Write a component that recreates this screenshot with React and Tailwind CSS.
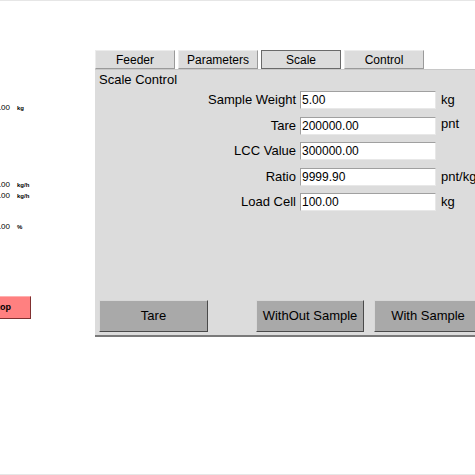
import React from "react";

const rows = [
  { label: "Sample Weight", value: "5.00", unit: "kg" },
  { label: "Tare", value: "200000.00", unit: "pnt", high: true },
  { label: "LCC Value", value: "300000.00", unit: "" },
  { label: "Ratio", value: "9999.90", unit: "pnt/kg" },
  { label: "Load Cell", value: "100.00", unit: "kg" },
];

const tabs = ["Feeder", "Parameters", "Scale", "Control"];

const Reading = ({ value, unit }) => (
  <div className="flex items-center h-[10px] gap-[7px]">
    <span className="text-[8px] text-black w-[16px] text-right">{value}</span>
    <span className="text-[6px] font-bold text-black">{unit}</span>
  </div>
);

const PanelButton = ({ children, className = "" }) => (
  <button
    className={`h-[32px] bg-[#a9a9a9] border border-t-[#d8d8d8] border-l-[#d8d8d8] border-r-[#4a4a4a] border-b-[#4a4a4a] text-[13px] text-black ${className}`}
  >
    {children}
  </button>
);

export default function App() {
  return (
    <div
      className="w-[475px] h-[475px] overflow-hidden bg-white border-t border-b border-[#e6e6e6] flex"
      style={{ fontFamily: '"Liberation Sans", Arial, sans-serif' }}
    >
      {/* left readings column, clipped by the window */}
      <div className="w-[101px] shrink-0 flex flex-col ml-[-6px]">
        <div className="mt-[102px]">
          <Reading value=".00" unit="kg" />
        </div>
        <div className="mt-[67px] flex flex-col gap-px">
          <Reading value=".00" unit="kg/h" />
          <Reading value=".00" unit="kg/h" />
        </div>
        <div className="mt-[21px]">
          <Reading value=".00" unit="%" />
        </div>
        <div className="mt-[64px] ml-[-20px] w-[57px] h-[23px] bg-[#ff8080] border border-t-[#ffb0b0] border-l-[#ffb0b0] border-r-[#803030] border-b-[#803030] flex items-center justify-end pr-[19px]">
          <span className="text-[9px] font-bold text-black">Stop</span>
        </div>
      </div>

      {/* scale panel */}
      <div className="w-[400px] shrink-0 flex flex-col mt-[49px]">
        <div className="flex gap-[3px] h-[19px]">
          {tabs.map((t) => (
            <div
              key={t}
              className={`w-[80px] h-[19px] flex items-center justify-center text-[12px] text-black bg-[#dcdcdc] border ${
                t === "Scale"
                  ? "border-[#6a6a6a]"
                  : "border-t-[#ececec] border-l-[#ececec] border-r-[#9a9a9a] border-b-[#9a9a9a]"
              }`}
            >
              {t}
            </div>
          ))}
        </div>
        <div className="h-[268px] bg-[#dcdcdc] border-t border-[#c8c8c8] border-b-2 border-b-[#7a7a7a] flex flex-col px-[4px]">
          <div className="text-[13px] text-black mt-[2px] leading-[16px]">Scale Control</div>
          <div className="flex flex-col gap-[7.5px] mt-[3px]">
            {rows.map((r) => (
              <div key={r.label} className="flex items-center h-[18px]">
                <div className="w-[201px] text-right text-[13px] text-black pr-[4px]">{r.label}</div>
                <div className="w-[136px] h-[18px] bg-white border border-t-[#a0a0a0] border-l-[#a0a0a0] border-r-[#e8e8e8] border-b-[#e8e8e8] text-[12px] text-black leading-[16px] pl-[1px]">
                  {r.value}
                </div>
                <div className={`ml-[5px] text-[13px] text-black whitespace-nowrap ${r.high ? "self-start mt-[-3px]" : ""}`}>
                  {r.unit}
                </div>
              </div>
            ))}
          </div>
          <div className="mt-auto mb-[3px] flex">
            <PanelButton className="w-[109px] shrink-0">Tare</PanelButton>
            <PanelButton className="w-[108px] ml-[48px] shrink-0">WithOut Sample</PanelButton>
            <PanelButton className="w-[108px] ml-[10px] shrink-0">With Sample</PanelButton>
          </div>
        </div>
      </div>
    </div>
  );
}
